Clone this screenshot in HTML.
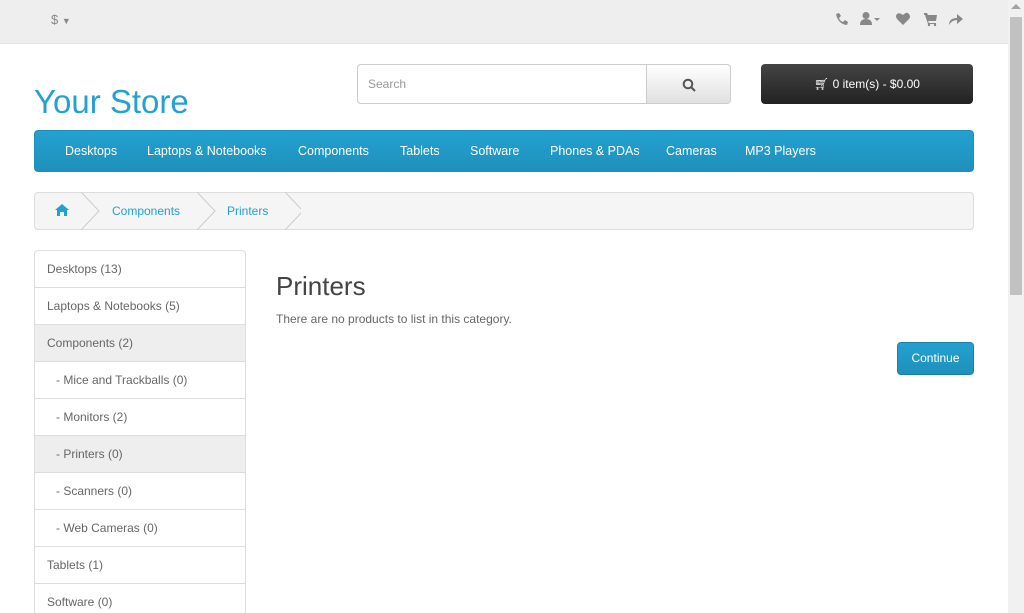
<!DOCTYPE html>
<html><head><style>
*{box-sizing:border-box;margin:0;padding:0}
html,body{width:1024px;height:613px;overflow:hidden}
body{font-family:"Liberation Sans",sans-serif;font-size:12px;color:#666;background:#fff;position:relative}
.top{position:absolute;left:0;top:0;width:1008px;height:44px;background:#eee;border-bottom:1px solid #e2e2e2}
.sb{position:absolute;left:1008px;top:0;width:16px;height:613px;background:#f1f1f1}
.thumb{position:absolute;left:1010px;top:17px;width:12px;height:278px;background:#c1c1c1}
.a{position:absolute}
.logo{left:34px;top:83px;font-size:33px;color:#23a1d1}
.search{left:357px;top:64px;width:290px;height:40px;border:1px solid #ccc;border-radius:4px 0 0 4px;padding:12px 10px;color:#999;font-size:12px}
.sbtn{left:646px;top:64px;width:85px;height:40px;border:1px solid #ccc;border-radius:0 4px 4px 0;background:linear-gradient(#fff,#e0e0e0)}
.cart{left:761px;top:64px;width:212px;height:40px;border-radius:4px;background:linear-gradient(#444,#222);color:#fff;text-align:center;line-height:40px;font-size:12px}
.menu{left:34px;top:130px;width:940px;height:42px;border-radius:4px;background:linear-gradient(#23a1d1,#1f90bb);border:1px solid #1f90bb;color:#fff;font-size:12.5px}
.menu span{position:absolute;top:13px}
.bc{left:34px;top:192px;width:940px;height:38px;border:1px solid #ddd;border-radius:4px;background:#f5f5f5;color:#23a1d1;font-size:12px}
.list{left:34px;top:250px;width:212px;border:1px solid #ddd;border-radius:4px 4px 0 0}
.list div{height:37px;border-bottom:1px solid #ddd;padding:11px 12px;font-size:12px;color:#666}
.list .ac{background:#eee}
h1{position:absolute;left:276px;top:271px;font-size:26px;font-weight:normal;color:#444}
.cont{left:897px;top:342px;width:77px;height:33px;border-radius:4px;background:linear-gradient(#23a1d1,#1f90bb);border:1px solid #1b81a8;color:#fff;font-size:12px;text-align:center;line-height:31px}
</style></head><body>
<div class="top"></div>
<div class="a" style="left:51px;top:12px;font-size:13px;color:#888">$ <span style="font-size:9px">▼</span></div>
<svg class="a" style="left:834px;top:11px" width="132" height="16" viewBox="0 0 132 16" fill="#888">
<path d="M2 3l3-1 2 3-2 2q1 3 4 4l2-2 3 2-1 3q-9-1-11-11z"/>
<circle cx="32" cy="4.5" r="3.5"/><path d="M26 14q0-6 6-6t6 6z"/><path d="M40 7h6l-3 3z"/>
<path d="M69 14l-6-6q-2-3 0-5t6 1q4-4 6-1t0 5z"/>
<path d="M90 2h3l1 2h9l-1 6h-8l1 2h7v1h-8l-3-9h-1z"/><circle cx="95" cy="14" r="1.2"/><circle cx="101" cy="14" r="1.2"/>
<path d="M115 14q0-7 8-7v-4l6 5-6 5v-4q-5 0-8 5z"/>
</svg>
<div class="a logo">Your Store</div>
<div class="a search">Search</div>
<div class="a sbtn"><svg style="position:absolute;left:35px;top:13px" width="14" height="14" viewBox="0 0 14 14" fill="none" stroke="#555" stroke-width="2"><circle cx="6" cy="6" r="4.3"/><path d="M9 9l4 4"/></svg></div>
<div class="a cart"><span style="font-size:12px">🛒︎</span> 0 item(s) - $0.00</div>
<div class="a menu"><span style="left:30px">Desktops</span><span style="left:112px">Laptops &amp; Notebooks</span><span style="left:263px">Components</span><span style="left:365px">Tablets</span><span style="left:435px">Software</span><span style="left:515px">Phones &amp; PDAs</span><span style="left:631px">Cameras</span><span style="left:710px">MP3 Players</span></div>
<div class="a bc">
<svg style="position:absolute;left:20px;top:11px" width="14" height="12" viewBox="0 0 14 12" fill="#23a1d1"><path d="M7 0l7 6h-2v6H9V8H5v4H2V6H0z"/></svg>
<svg style="position:absolute;left:46px;top:-1px" width="220" height="38" fill="none" stroke="#ccc"><path d="M0 0l18 19-18 19M116 0l18 19-18 19M204 0l18 19-18 19"/></svg>
<span style="position:absolute;left:77px;top:11px">Components</span><span style="position:absolute;left:192px;top:11px">Printers</span></div>
<div class="a list">
<div>Desktops (13)</div><div>Laptops &amp; Notebooks (5)</div><div class="ac">Components (2)</div><div style="padding-left:21px">- Mice and Trackballs (0)</div><div style="padding-left:21px">- Monitors (2)</div><div class="ac" style="padding-left:21px">- Printers (0)</div><div style="padding-left:21px">- Scanners (0)</div><div style="padding-left:21px">- Web Cameras (0)</div><div>Tablets (1)</div><div>Software (0)</div></div>
<h1>Printers</h1>
<div class="a" style="left:276px;top:312px;font-size:12px">There are no products to list in this category.</div>
<div class="a cont">Continue</div>
<div class="sb"></div><div class="thumb"></div>
<div class="a" style="left:1011px;top:4px;width:0;height:0;border:5px solid transparent;border-bottom-color:#a3a3a3;border-top:0"></div>
</body></html>
